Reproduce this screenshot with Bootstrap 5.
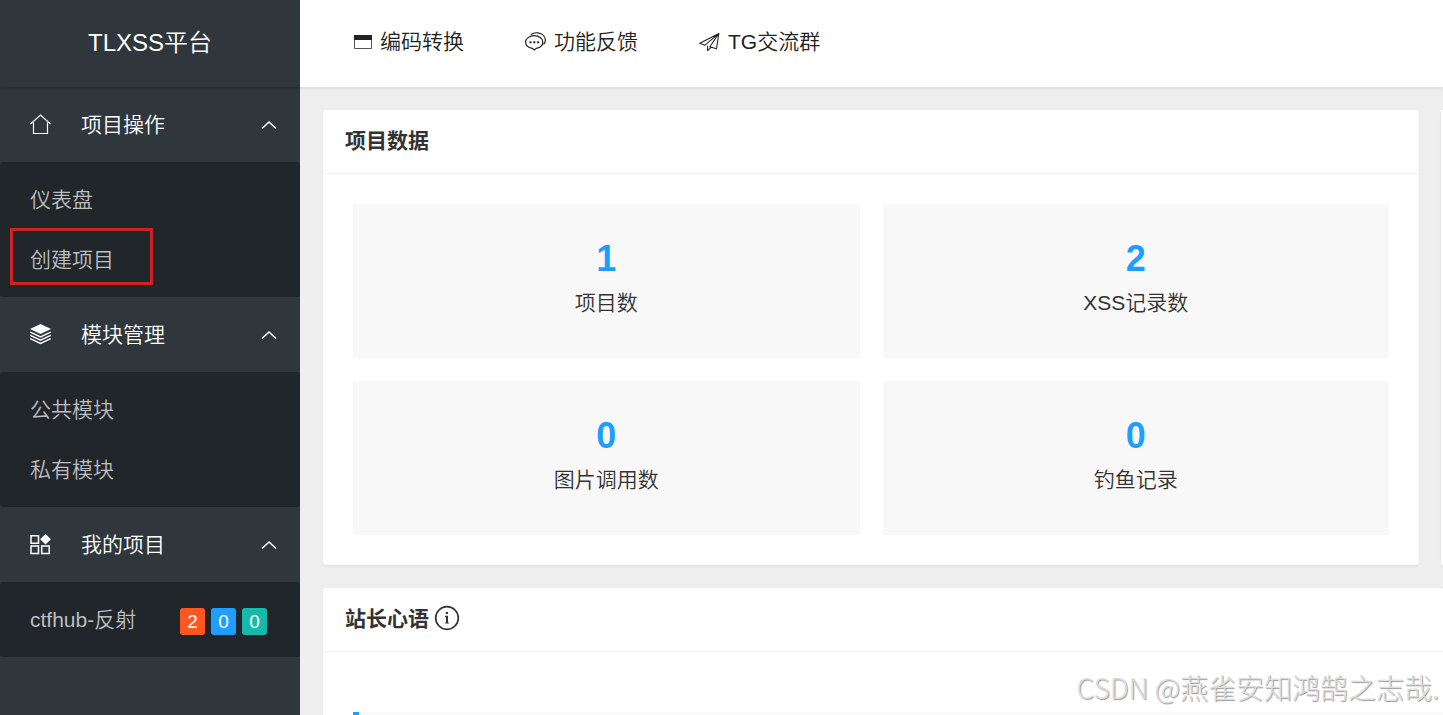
<!DOCTYPE html>
<html lang="zh-CN">
<head>
<meta charset="utf-8">
<meta name="viewport" content="width=device-width, initial-scale=1">
<title>TLXSS平台</title>
<link href="https://cdn.jsdelivr.net/npm/bootstrap@5.3.0/dist/css/bootstrap.min.css" rel="stylesheet">
<style>
  body { font-family: "Liberation Sans", "Noto Sans CJK SC", sans-serif; font-size: 21px; line-height: 30px; font-weight: 350; color: #333; background: #eee; }
  a { text-decoration: none; }
  .side { width: 300px; background: #2f363c; }
  .brand { height: 87px; padding-bottom: 2px; font-size: 24px; color: #fff; box-shadow: 0 1px 2px rgba(0,0,0,.3); }
  .menu-head { height: 75px; padding: 0 23px 0 30px; background: #2f363c; color: #fff; border: 0; font-weight: 350; }
  .menu-head .icon { width: 21px; margin-right: 30px; }
  .submenu { background: #20262a; padding: 8px 0 7px; border-radius: 3px; }
  .submenu a { height: 60px; padding: 0 33px 0 30px; color: #bcbebf; }
  .marked { left: 10px; top: -2px; width: 143px; height: 57px; border: 3px solid #cf2222; pointer-events: none; }
  .counts { gap: 6px; padding-top: 2px; }
  .count { width: 25px; height: 27px; font-size: 19px; line-height: 27px; border-radius: 3px; padding: 0; font-weight: 400; }
  .bg-orange { background: #ff5722; }
  .bg-azure { background: #1e9fff; }
  .bg-teal { background: #16baaa; }
  .topbar { height: 87px; padding: 0 54px 3px; gap: 61px; background: #fff; box-shadow: 0 2px 3px rgba(0,0,0,.08); }
  .topbar a { gap: 8px; color: #222; }
  .content { padding: 23px 0 0 23px; }
  .stack { gap: 23px; }
  .columns { gap: 22px; }
  .panel { background: #fff; border-radius: 3px; box-shadow: 0 2px 3px rgba(0,0,0,.05); }
  .panel-title { height: 64px; padding: 0 22px 2px; margin: 0; font-size: 21px; font-weight: 700; border-bottom: 1px solid #f4f4f4; }
  .edge { width: 2px; border-radius: 3px 0 0 3px; }
  .tiles { padding: 30px; display: grid; grid-template-columns: 1fr 1fr; gap: 23px; }
  .tile { height: 154px; padding-top: 37px; background: #f8f8f8; color: #333; border-radius: 2px; }
  .tile strong { font-size: 36px; line-height: 36px; color: #1e9fff; }
  .tile span { margin-top: 11px; }
  .note-body { padding: 60px 0 30px 30px; }
  .note { min-height: 75px; border-left: 6px solid #1e9fff; background: #fafafa; }
  .watermark { right: 4px; bottom: 8px; font-family: "Noto Sans CJK SC", sans-serif; font-size: 28px; line-height: 40px; font-weight: 300; color: #ddd; text-shadow: 1px 1px 1px #999; }
</style>
</head>
<body>
<div class="d-flex vh-100 overflow-hidden position-relative">
  <aside class="side flex-shrink-0">
    <div class="brand d-flex align-items-center justify-content-center position-relative">TLXSS平台</div>
    <nav>
      <button type="button" class="menu-head d-flex align-items-center w-100">
        <svg class="icon" width="21" height="21" viewBox="0 0 21 21" fill="none" stroke="#fff" stroke-width="1.2"><path d="M.5 10 10.500 1 20.500 10M3.500 8.500V19.500H17.500V8.500"/></svg>
        <span>项目操作</span>
        <svg class="ms-auto" width="16" height="10" viewBox="0 0 16 10" fill="none" stroke="#fff" stroke-width="1.5"><path d="M1 8.500 8 2l7 6.500"/></svg>
      </button>
      <div class="submenu">
        <a href="#" class="d-flex align-items-center">仪表盘</a>
        <a href="#" class="d-flex align-items-center position-relative">创建项目<i class="marked position-absolute"></i></a>
      </div>
      <button type="button" class="menu-head d-flex align-items-center w-100">
        <svg class="icon" width="21" height="21" viewBox="0 0 21 21"><path fill="#fff" d="M10.500 0 21 5 10.500 10 0 5z"/><path fill="none" stroke="#fff" stroke-width="1.4" d="M.3 8.200 10.500 13 20.700 8.200M.3 11.400 10.500 16.200 20.700 11.400M.3 14.600 10.500 19.400 20.700 14.600"/></svg>
        <span>模块管理</span>
        <svg class="ms-auto" width="16" height="10" viewBox="0 0 16 10" fill="none" stroke="#fff" stroke-width="1.5"><path d="M1 8.500 8 2l7 6.500"/></svg>
      </button>
      <div class="submenu">
        <a href="#" class="d-flex align-items-center">公共模块</a>
        <a href="#" class="d-flex align-items-center">私有模块</a>
      </div>
      <button type="button" class="menu-head d-flex align-items-center w-100">
        <svg class="icon" width="21" height="21" viewBox="0 0 21 21" fill="none" stroke="#fff" stroke-width="1.5"><path d="M1 1.800h7.500v7.500H1zM1 12.100h7.500v7.500H1zM11.700 12.100h7.500v7.500h-7.500z"/><path fill="#fff" stroke="none" d="M15.500 0 21 5.300 15.500 10.600 10.200 5.300z"/></svg>
        <span>我的项目</span>
        <svg class="ms-auto" width="16" height="10" viewBox="0 0 16 10" fill="none" stroke="#fff" stroke-width="1.5"><path d="M1 8.500 8 2l7 6.500"/></svg>
      </button>
      <div class="submenu">
        <a href="#" class="d-flex align-items-center justify-content-between">ctfhub-反射
          <span class="d-flex counts">
            <span class="badge count bg-orange">2</span><span class="badge count bg-azure">0</span><span class="badge count bg-teal">0</span>
          </span>
        </a>
      </div>
    </nav>
  </aside>

  <div class="flex-grow-1 overflow-hidden">
    <header class="topbar d-flex align-items-center position-relative">
      <a href="#" class="d-flex align-items-center">
        <svg width="18" height="16" viewBox="0 0 18 16"><path fill="none" stroke="#555" d="M.5 1.500h17v13H.5z"/><path fill="#222" d="M0 1h18v5H0z"/></svg>
        编码转换</a>
      <a href="#" class="d-flex align-items-center">
        <svg width="21" height="20" viewBox="0 0 21 20" fill="none" stroke="#222" stroke-width="1.200"><path d="M9.200 3.700c4.800 0 8.600 2.900 8.600 6.400s-2.900 5.600-6.400 6.200L9.300 18 7.200 16.300C3.500 15.700.6 13.500.6 10.100s3.800-6.400 8.600-6.400z"/><path d="M6 2.400C8 1 10.500.5 13 .9c4.300.7 7.400 3.600 7.400 7.200 0 1.700-.7 3.200-1.900 4.300"/><path stroke="none" fill="#222" d="M4.500 9.200h2v2h-2zM8.300 9.200h2v2h-2zM12.100 9.200h2v2h-2z"/></svg>
        功能反馈</a>
      <a href="#" class="d-flex align-items-center">
        <svg width="21" height="20" viewBox="0 0 22 20" fill="none" stroke="#222" stroke-width="1.100" stroke-linejoin="round"><path d="M20.800 1 .8 11.300 6 13.500 20.800 1 18.300 17.200 11.300 15 20.800 1M9 13.800V19l3.700-3.400"/></svg>
        TG交流群</a>
    </header>
    <main class="content d-flex flex-column stack">
      <div class="d-flex columns">
        <section class="panel flex-grow-1">
          <h2 class="panel-title d-flex align-items-center">项目数据</h2>
          <div class="tiles text-center">
            <a href="#" class="tile d-flex flex-column"><strong>1</strong><span>项目数</span></a>
            <a href="#" class="tile d-flex flex-column"><strong>2</strong><span>XSS记录数</span></a>
            <a href="#" class="tile d-flex flex-column"><strong>0</strong><span>图片调用数</span></a>
            <a href="#" class="tile d-flex flex-column"><strong>0</strong><span>钓鱼记录</span></a>
          </div>
        </section>
        <section class="panel edge"></section>
      </div>
      <section class="panel">
        <h2 class="panel-title d-flex align-items-center">站长心语
          <svg class="ms-1" width="27" height="27" viewBox="0 0 27 27"><circle cx="14" cy="13" r="11.300" fill="none" stroke="#333" stroke-width="1.700"/><path fill="#333" d="M12.800 7h2.200v2.100h-2.200zM12 10.800h3v6.700h.9v1h-3.800v-1h.9v-5.600h-1z"/></svg>
        </h2>
        <div class="note-body"><blockquote class="note"></blockquote></div>
      </section>
    </main>
  </div>
  <div class="watermark position-absolute text-nowrap">CSDN @燕雀安知鸿鹄之志哉.</div>
</div>
<script src="https://cdn.jsdelivr.net/npm/bootstrap@5.3.0/dist/js/bootstrap.bundle.min.js"></script>
</body>
</html>
